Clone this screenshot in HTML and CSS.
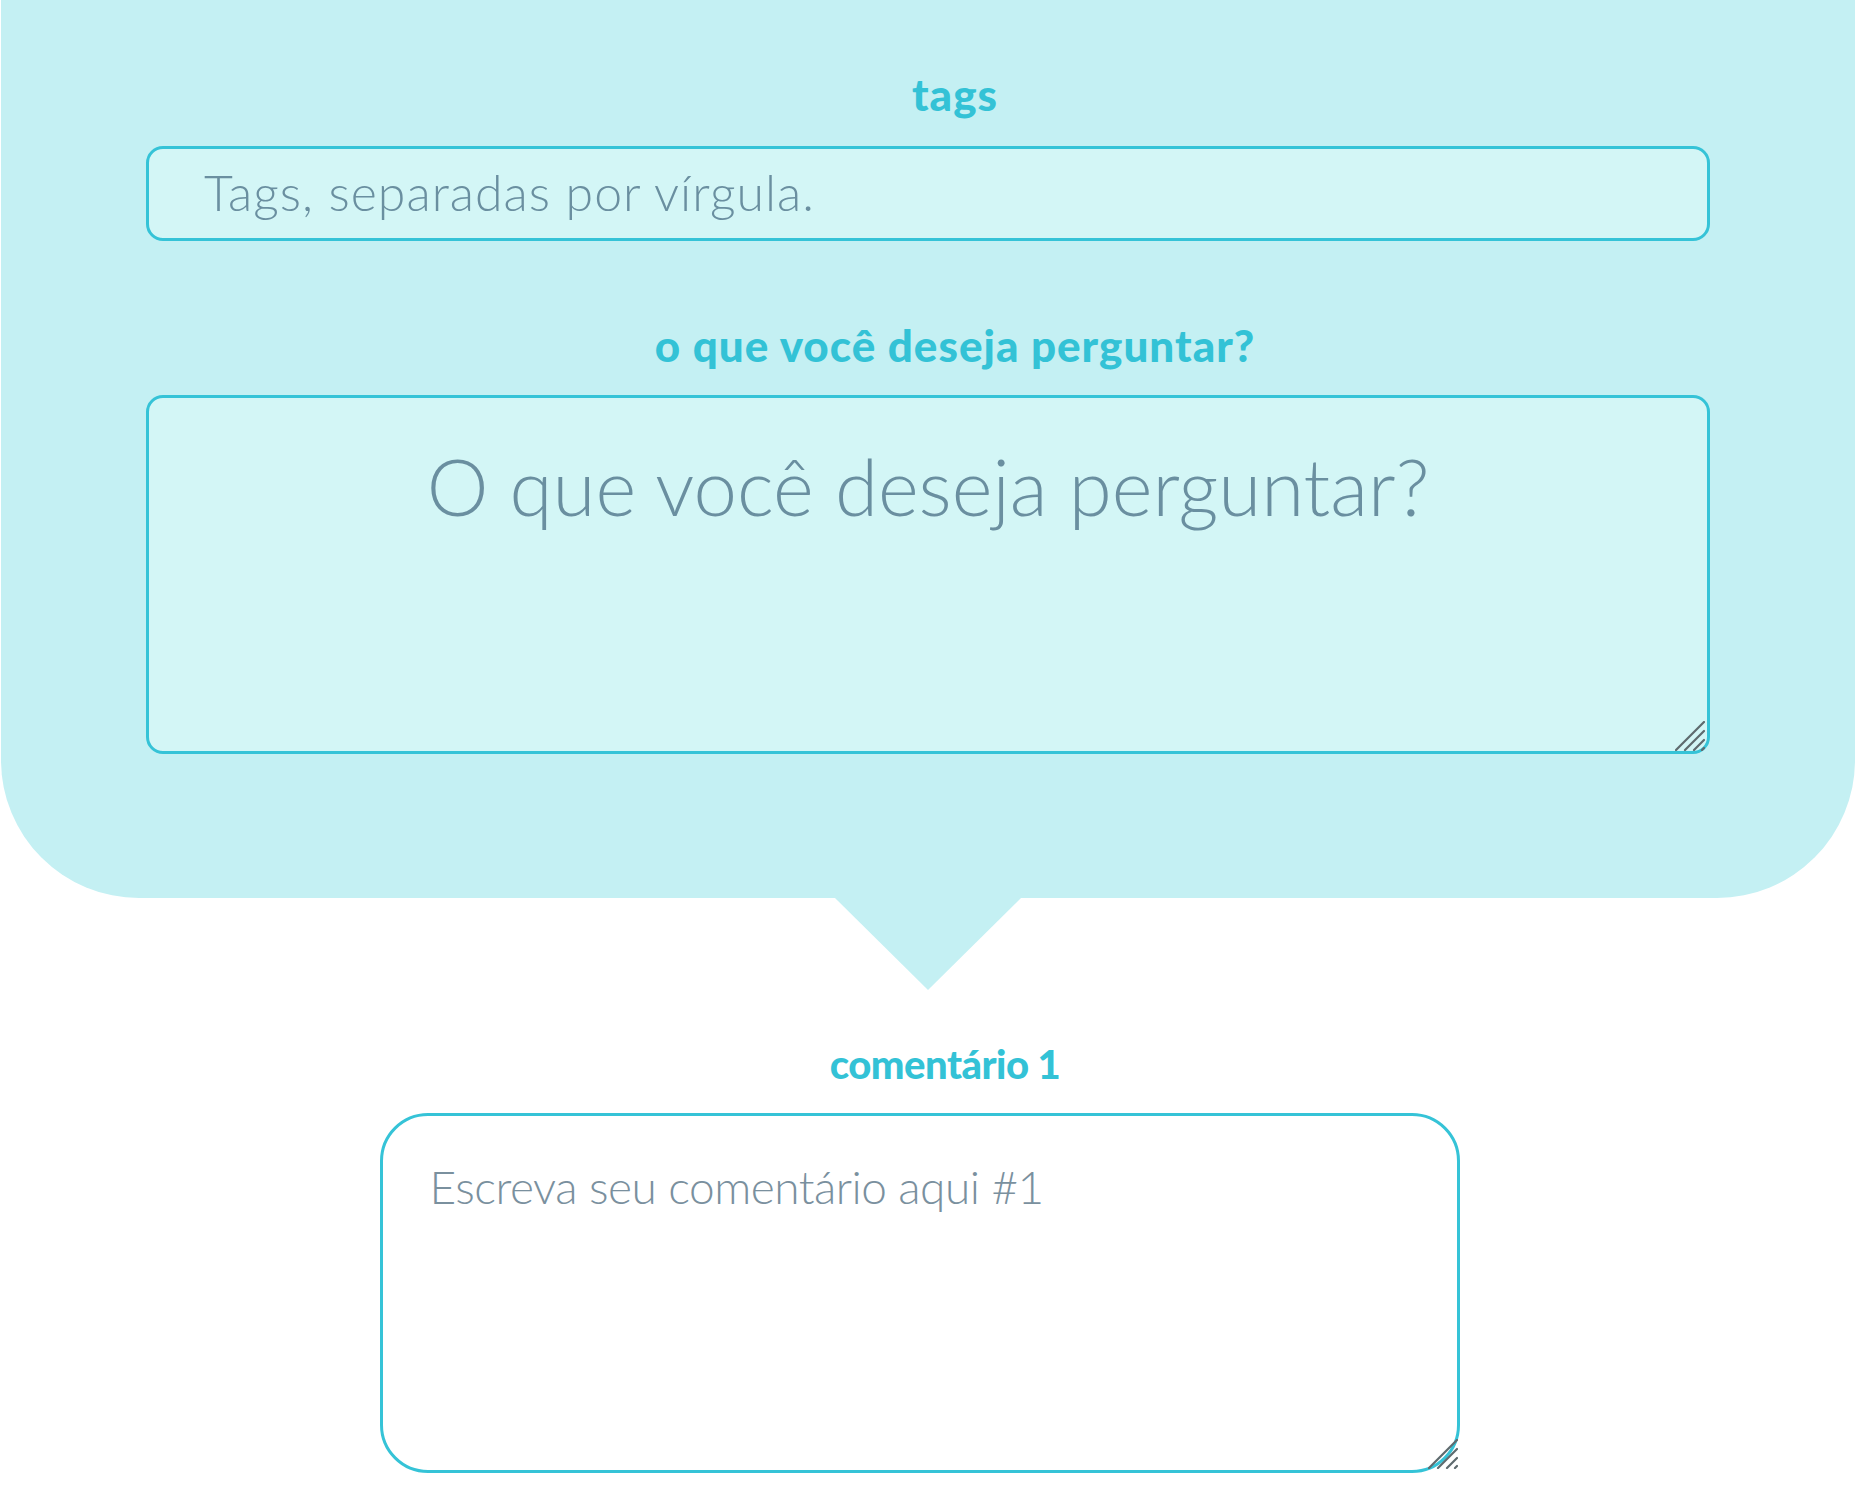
FILE: index.html
```html
<!DOCTYPE html>
<html lang="pt">
<head>
<meta charset="utf-8">
<title>Pergunta</title>
<link rel="stylesheet" href="styles.css">
</head>
<body>
<form class="page">
  <section class="bubble">
    <label class="label label-tags" for="tags">tags</label>
    <input id="tags" class="field field-tags" type="text" placeholder="Tags, separadas por vírgula.">
    <label class="label label-question" for="question">o que você deseja perguntar?</label>
    <div class="field-wrap">
      <textarea id="question" class="field field-question" placeholder="O que você deseja perguntar?"></textarea>
      <svg class="resizer" viewBox="0 0 30 30" aria-hidden="true">
        <path d="M1 29 L29 1 M10 29 L29 10 M19 29 L29 19 M27 29 L29 27"/>
      </svg>
    </div>
  </section>
  <section class="comment">
    <label class="label label-comment" for="c1">comentário 1</label>
    <div class="field-wrap comment-wrap">
      <textarea id="c1" class="field field-comment" placeholder="Escreva seu comentário aqui #1"></textarea>
      <svg class="resizer resizer-comment" viewBox="0 0 30 30" aria-hidden="true">
        <path d="M1 29 L29 1 M10 29 L29 10 M19 29 L29 19 M27 29 L29 27"/>
      </svg>
    </div>
  </section>
</form>
</body>
</html>
```
FILE: styles.css
```css
html, body {
  margin: 0;
  padding: 0;
  background: #ffffff;
}
body {
  font-family: Lato, "Open Sans", "Liberation Sans", sans-serif;
  width: 1856px;
  height: 1487px;
  overflow: hidden;
}
.page {
  display: flex;
  flex-direction: column;
}
.bubble {
  position: relative;
  background: #c4f0f3;
  margin: 0 1px 0 1px;
  padding: 70px 145px 144px 145px;
  border-radius: 0 0 138px 138px;
  display: flex;
  flex-direction: column;
  align-items: stretch;
}
.bubble::after {
  content: "";
  position: absolute;
  left: 50%;
  bottom: -92px;
  margin-left: -93px;
  border-top: 92px solid #c4f0f3;
  border-left: 93px solid transparent;
  border-right: 93px solid transparent;
}
.label {
  display: block;
  text-align: center;
  color: #33c2d6;
  font-weight: 900;
  font-size: 44px;
  line-height: 48px;
  letter-spacing: 1px;
  padding-left: 54px;
}
.label-tags {
  margin-bottom: 28px;
}
.label-question {
  margin-top: 80px;
  margin-bottom: 26px;
}
.field-wrap {
  position: relative;
  display: flex;
}
.field {
  box-sizing: border-box;
  font-family: Lato, "Open Sans", "Liberation Sans", sans-serif;
  font-weight: 300;
  border: 3px solid #35c3d7;
  outline: none;
  margin: 0;
  color: #5f8595;
  resize: none;
}
.field::placeholder {
  color: #6a8fa0;
  opacity: 1;
}
.field-tags {
  width: 100%;
  height: 95px;
  background: #d3f6f6;
  border-radius: 17px;
  padding: 0 20px 4px 55px;
  font-size: 50px;
  letter-spacing: 1px;
}
.field-question {
  width: 100%;
  height: 359px;
  background: #d3f6f6;
  border-radius: 17px;
  padding: 40px 20px 20px;
  font-size: 78px;
  line-height: 96px;
  text-align: center;
}
.resizer {
  position: absolute;
  right: 5px;
  bottom: 3px;
  width: 30px;
  height: 30px;
  fill: none;
  stroke: #5e6a6e;
  stroke-width: 2.2;
  stroke-linecap: round;
  pointer-events: none;
}
.comment {
  display: flex;
  flex-direction: column;
  align-items: center;
  padding-top: 142px;
}
.label-comment {
  font-size: 40px;
  letter-spacing: -0.5px;
  padding-left: 34px;
  margin-bottom: 25px;
}
.comment-wrap {
  width: 1080px;
  margin-right: 17px;
}
.field-comment {
  width: 100%;
  height: 360px;
  background: #ffffff;
  border-radius: 48px;
  padding: 43px 40px 20px 47px;
  font-size: 46px;
  line-height: 56px;
  letter-spacing: -0.5px;
}
.field-comment::placeholder {
  color: #7a909e;
}
.resizer-comment {
  right: 2px;
  bottom: 4px;
}
```
